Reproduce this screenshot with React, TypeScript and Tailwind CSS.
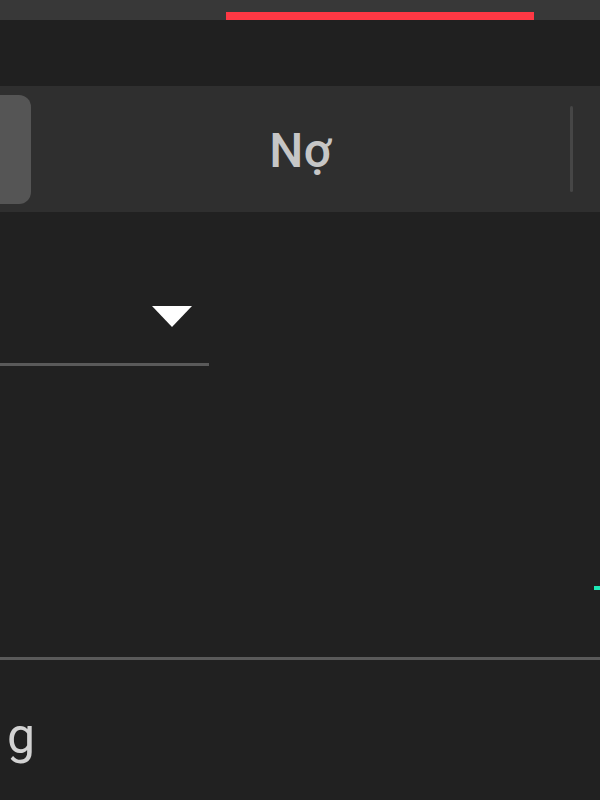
export default function App() {
  return (
    <div className="w-[600px] h-[800px] overflow-hidden bg-[#212121] flex flex-col" style={{ fontFamily: "Roboto, 'Noto Sans', sans-serif" }}>
      {/* status / progress strip */}
      <div className="h-[20px] shrink-0 bg-[#383838] flex items-end">
        <div className="ml-[226px] w-[308px] h-[8px] bg-[#ff3844]" />
      </div>

      <div className="h-[66px] shrink-0 bg-[#202020]" />

      {/* tabs */}
      <div className="h-[126px] shrink-0 bg-[#2f2f2f] flex items-center">
        <div className="w-[31px] h-[109px] bg-[#555555] rounded-r-[12px] shrink-0" />
        <div className="flex-1 flex items-center justify-center pt-[4px]">
          <span className="text-[48px] font-medium text-[#c6c6c6] leading-none tracking-[0.5px]">Nợ</span>
        </div>
        <div className="w-[3px] h-[86px] bg-[#464646] rounded-full mr-[27px]" />
      </div>

      {/* dropdown */}
      <div className="pt-[94px] shrink-0">
        <div className="w-[209px] h-[57px] flex items-start">
          <div className="ml-[152px] w-0 h-0 border-l-[20px] border-r-[20px] border-t-[21px] border-l-transparent border-r-transparent border-t-white" />
        </div>
        <div className="w-[209px] h-[3px] bg-[#5a5a5a]" />
      </div>

      <div className="h-[291px] shrink-0 flex justify-end items-start pt-[220px]">
        <div className="w-[6px] h-[4px] bg-[#1de9b6]" />
      </div>

      <div className="h-[3px] shrink-0 bg-[#5a5a5a] w-full" />

      <div className="pt-[51px] pl-[7px]">
        <span className="text-[50px] text-[#d2d2d2] leading-none">g</span>
      </div>
    </div>
  );
}
